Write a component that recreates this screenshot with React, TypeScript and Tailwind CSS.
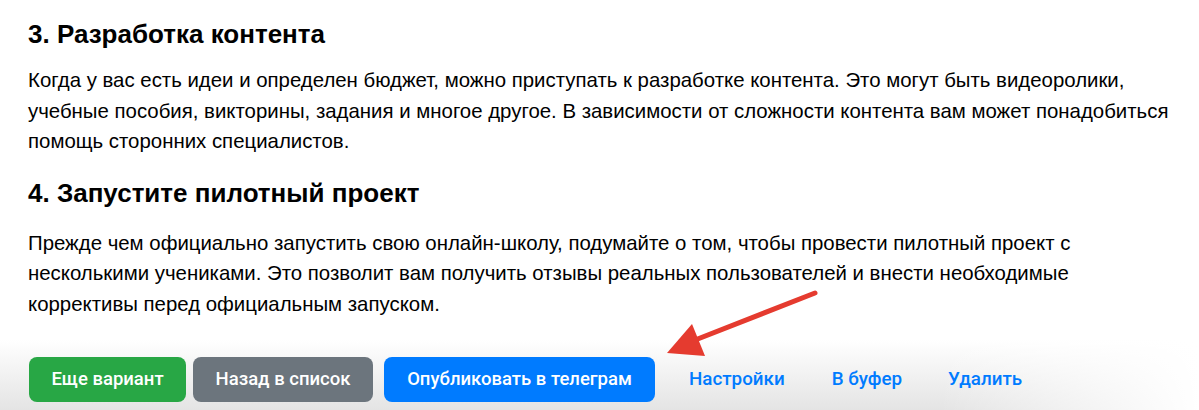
import React from "react";

export default function App() {
  return (
    <div className="relative w-[1199px] h-[410px] overflow-hidden bg-white text-black" style={{ fontFamily: '"Liberation Sans", Arial, sans-serif' }}>
      <div className="pl-[28px]">
        <h3 className="mt-[19px] text-[26px] leading-[30px] font-bold">3. Разработка контента</h3>
        <p className="mt-[16px] text-[20.4px] leading-[30.5px] whitespace-nowrap">
          Когда у вас есть идеи и определен бюджет, можно приступать к разработке контента. Это могут быть видеоролики,
          <br />
          учебные пособия, викторины, задания и многое другое. В зависимости от сложности контента вам может понадобиться
          <br />
          помощь сторонних специалистов.
        </p>
        <h3 className="mt-[21px] text-[26px] leading-[30px] font-bold">4. Запустите пилотный проект</h3>
        <p className="mt-[20px] text-[20.4px] leading-[30.5px] whitespace-nowrap">
          Прежде чем официально запустить свою онлайн-школу, подумайте о том, чтобы провести пилотный проект с
          <br />
          несколькими учениками. Это позволит вам получить отзывы реальных пользователей и внести необходимые
          <br />
          коррективы перед официальным запуском.
        </p>
      </div>
      <div className="absolute left-0 right-0 bottom-0 h-[70px] bg-gradient-to-b from-white to-[#e4e4e4]" />
      <div className="absolute right-0 bottom-0 h-[70px] w-[260px] bg-gradient-to-l from-white to-transparent" />
      <div className="absolute left-0 top-[357px] pl-[29px] flex items-center text-[18.5px] font-medium" style={{ fontFamily: 'Roboto, "Liberation Sans", sans-serif' }}>
        <button className="h-[45px] w-[157px] rounded-[8px] bg-[#28a745] text-white">Еще вариант</button>
        <button className="ml-[7px] h-[45px] w-[180px] rounded-[8px] bg-[#6c757d] text-white">Назад в список</button>
        <button className="ml-[11px] h-[45px] w-[271px] rounded-[8px] bg-[#007bff] text-white">Опубликовать в телеграм</button>
        <a className="ml-[34px] text-[18.8px] text-[#007bff]">Настройки</a>
        <a className="ml-[47px] text-[18.8px] text-[#007bff]">В буфер</a>
        <a className="ml-[46px] text-[18.8px] text-[#007bff]">Удалить</a>
      </div>
      <svg className="absolute left-0 top-0 pointer-events-none" width="1199" height="410">
        <line x1="815" y1="293" x2="690" y2="342" stroke="#e53b2f" strokeWidth="5" strokeLinecap="round" />
        <polygon points="667,353 692,324 705,356" fill="#e53b2f" />
      </svg>
    </div>
  );
}
